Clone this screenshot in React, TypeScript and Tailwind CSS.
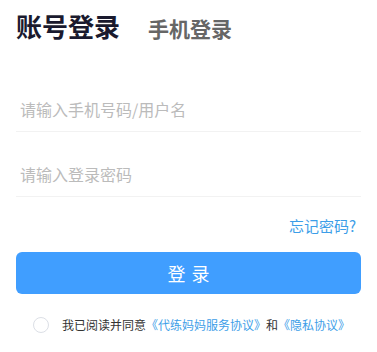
import { useState } from "react";

export default function App() {
  const [agreed, setAgreed] = useState(false);

  return (
    <div
      className="w-[377px] h-[352px] bg-white px-4 pt-[8px]"
      style={{ fontFamily: '"Noto Sans CJK SC", "Noto Sans", sans-serif' }}
    >
      <div className="flex items-end gap-[28px] h-[36px]">
        <span className="text-[26px] leading-[36px] font-bold text-[#1a1a2e]">账号登录</span>
        <span className="text-[21px] leading-[32px] font-bold text-[#666666]">手机登录</span>
      </div>

      <div className="mt-[23px]">
        <div className="h-[65px] flex items-end border-b border-[#f2f2f2]">
          <input
            className="w-full h-[44px] px-1 text-[16px] text-[#333] placeholder-[#bbbbbb] outline-none bg-transparent"
            placeholder="请输入手机号码/用户名"
          />
        </div>
        <div className="h-[65px] flex items-end border-b border-[#f2f2f2]">
          <input
            type="password"
            className="w-full h-[44px] px-1 text-[16px] text-[#333] placeholder-[#bbbbbb] outline-none bg-transparent"
            placeholder="请输入登录密码"
          />
        </div>
      </div>

      <div className="mt-[19px] flex justify-end pr-[5px]">
        <a className="text-[15px] leading-[20px] text-[#3d9ee8] cursor-pointer">忘记密码?</a>
      </div>

      <button className="mt-[16px] w-full h-[42px] rounded-[6px] bg-[#409eff] text-white text-[18px] tracking-[6px] pl-[6px]">
        登录
      </button>

      <div className="mt-[21px] flex items-center h-[20px] pl-[17px] gap-[13px]">
        <button
          onClick={() => setAgreed(!agreed)}
          className={`w-[16px] h-[16px] rounded-full border ${
            agreed ? "bg-[#409eff] border-[#409eff]" : "border-[#dcdfe6] bg-white"
          }`}
        />
        <p className="text-[12px] leading-[20px] text-[#333]">
          我已阅读并同意
          <span className="text-[#3d9ee8]">《代练妈妈服务协议》</span>
          和
          <span className="text-[#3d9ee8]">《隐私协议》</span>
        </p>
      </div>
    </div>
  );
}
